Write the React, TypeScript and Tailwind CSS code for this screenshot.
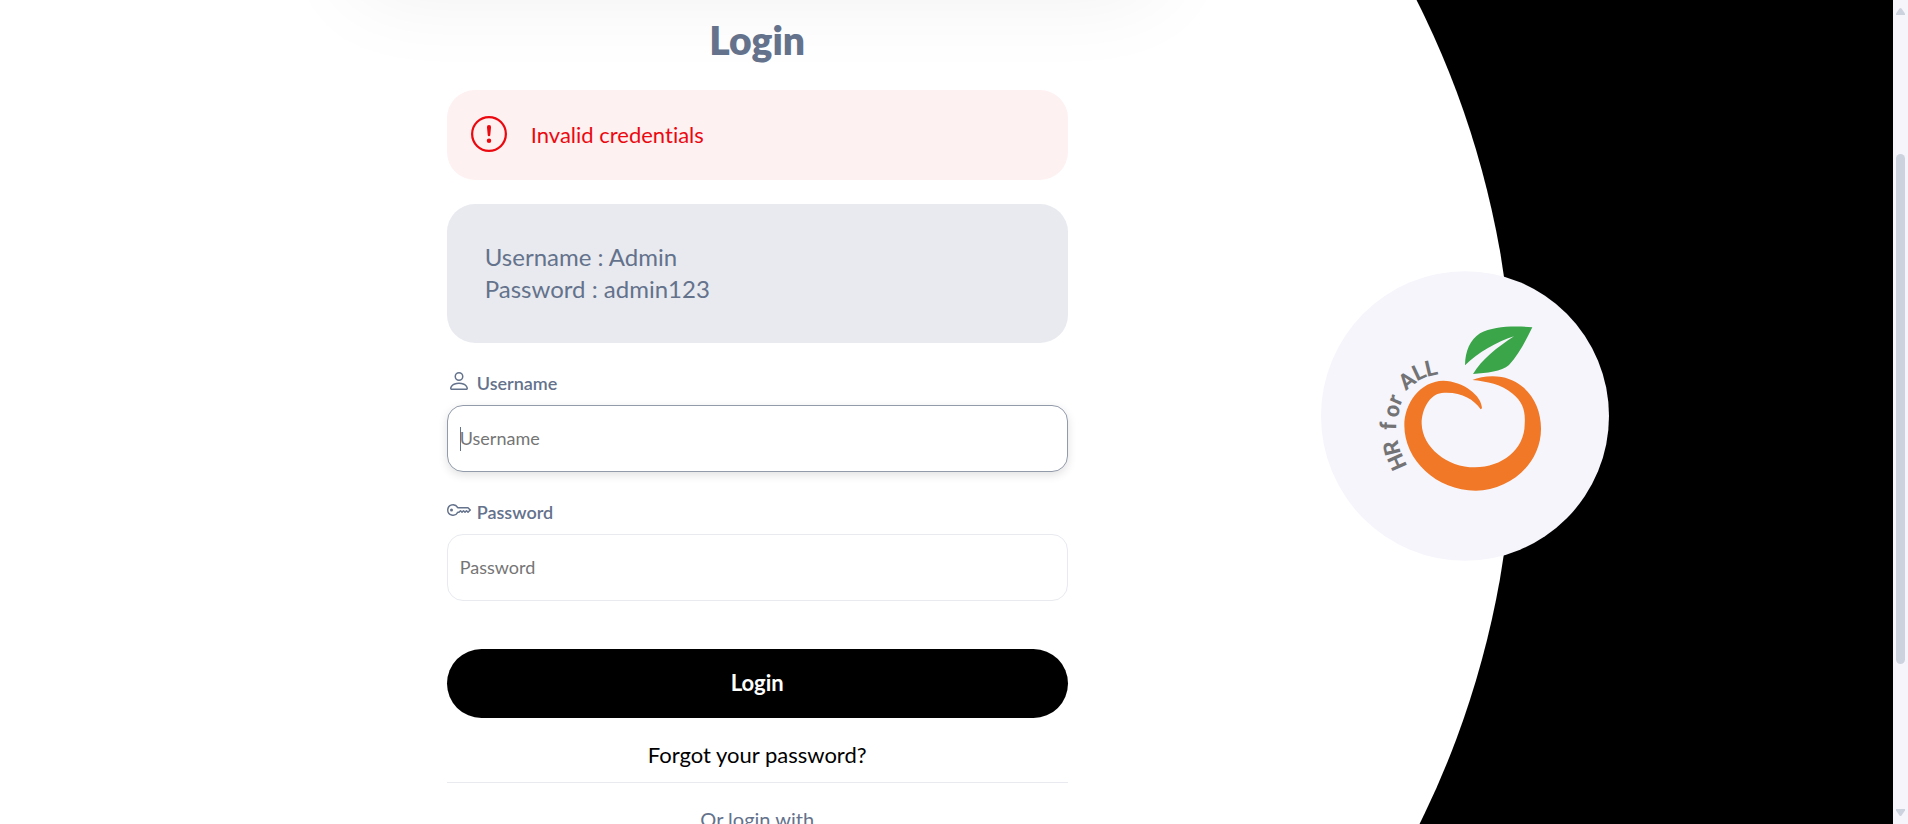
import type { ReactNode } from "react";
import { BsExclamationCircle, BsKey, BsPerson } from "react-icons/bs";

function BrandBadge() {
  return (
    <svg viewBox="33 33 864 868" className="h-[290px] w-[288px]" role="img" aria-label="HR for ALL">
      <ellipse cx="465" cy="467" rx="432" ry="434" fill="#f6f5fb" />
      <path
        fill="#3ba54a"
        d="M465 315 C466 270 480 240 510 219 C550 198 610 196 667 201 C648 240 625 285 597 314 C575 334 530 338 489 341 C515 298 560 262 612 228 C560 245 505 275 465 315Z"
      />
      <path
        fill="#f07826"
        d="M512 447 C490 415 450 393 395 398 C360 402 335 445 335 490 C337 560 410 621 495 621 C575 621 644 568 644 492 C647 450 638 425 608 400 C575 372 530 363 487 359 C510 350 540 345 575 350 C650 365 693 430 693 505 C693 610 600 690 497 691 C380 691 283 600 283 495 C283 430 330 362 400 361 C460 363 515 405 516 444 Z"
      />
      <text
        x="292 272 258 263 270 287 320 351"
        y="617 578 509 474 437 392 363 349"
        rotate="-114 -104 -88 -78 -66 -38 -25 -13"
        fill="#737375"
        fontSize="66"
        fontWeight="700"
        fontFamily="Roboto, 'Liberation Sans', sans-serif"
      >
        HRforALL
      </text>
    </svg>
  );
}

type FieldProps = {
  id: string;
  label: string;
  type: string;
  icon: ReactNode;
  active?: boolean;
};

function Field({ id, label, type, icon, active }: FieldProps) {
  return (
    <div>
      <label htmlFor={id} className="flex h-8 items-center gap-1.5 text-lg font-semibold">
        {icon}
        <span className="pt-1">{label}</span>
      </label>
      <div className="relative mt-2">
        <input
          id={id}
          type={type}
          placeholder={label}
          className={
            active
              ? "block h-[67px] w-full rounded-2xl border border-[#929baa] bg-white px-3 pb-0.5 text-lg shadow-[0_3px_10px_rgba(0,0,0,0.12)] outline-none placeholder:text-[#757575]"
              : "block h-[67px] w-full rounded-2xl border border-[#e8eaef] bg-white px-3 pb-0.5 text-lg outline-none placeholder:text-[#757575]"
          }
        />
        {active && <span className="absolute top-[22px] left-[13px] h-6 w-px bg-[#64728c]" />}
      </div>
    </div>
  );
}

export default function App() {
  return (
    <div className="flex h-screen overflow-hidden bg-white font-['Lato','Open_Sans',sans-serif] text-[#64728c] [font-variant-ligatures:none]">
      <div className="relative min-w-0 flex-1 bg-[linear-gradient(to_right,white_50%,black_50%)]">
        <main className="flex h-full w-4/5 flex-col items-center bg-white [clip-path:ellipse(50%_844px_at_50%_415px)]">
          <div className="-mt-32 h-32 w-[53%] shrink-0 rounded-3xl bg-white shadow-[0_-6px_90px_rgba(0,0,0,0.065)]" />
          <form className="flex w-[41%] flex-col pt-4" onSubmit={(e) => e.preventDefault()}>
            <h1 className="text-center text-[39px] leading-[48px] font-extrabold">Login</h1>
            <div
              role="alert"
              className="mt-[26px] flex h-[90px] items-center gap-6 rounded-[28px] bg-[#fef1f2] px-6 pb-0.5 text-[22px] text-[#eb0910]"
            >
              <BsExclamationCircle className="size-9" />
              <p>Invalid credentials</p>
            </div>
            <div className="mt-6 flex h-[139px] flex-col justify-center rounded-[28px] bg-[#e8eaef] px-[38px] pb-0.5 text-2xl leading-8">
              <p>Username : Admin</p>
              <p>Password : admin123</p>
            </div>
            <div className="mt-[22px] flex flex-col gap-[22px]">
              <Field id="username" label="Username" type="text" active icon={<BsPerson className="size-6" />} />
              <Field id="password" label="Password" type="password" icon={<BsKey className="size-6" />} />
            </div>
            <button type="submit" className="mt-12 h-[69px] rounded-full bg-black pb-0.5 text-[22px] font-bold text-white">
              Login
            </button>
            <a href="#reset" className="mt-6 text-center text-[22px] leading-[26px] text-black">
              Forgot your password?
            </a>
            <div className="mt-3.5 border-t border-[#e8eaef] pt-6 text-center text-xl leading-6">
              <p>Or login with</p>
            </div>
          </form>
        </main>
        <div className="absolute top-[271px] left-[77.4%] -translate-x-1/2">
          <BrandBadge />
        </div>
      </div>
      <div aria-hidden="true" className="flex w-[15px] flex-col items-center justify-between bg-[#f6f5fb] py-2">
        <svg viewBox="0 0 9 7" className="h-[7px] w-[9px]">
          <path d="M3.5 .5Q4.5 -.5 5.5 .5L9 5.5V7H0V5.5Z" fill="#cdd3de" />
        </svg>
        <div className="mb-[6px] h-[63%] w-[9px] rounded-full bg-[#cdd3de]" />
        <svg viewBox="0 0 9 7" className="h-[7px] w-[9px]">
          <path d="M3.5 6.5Q4.5 7.5 5.5 6.5L9 1.5V0H0V1.5Z" fill="#cdd3de" />
        </svg>
      </div>
    </div>
  );
}
